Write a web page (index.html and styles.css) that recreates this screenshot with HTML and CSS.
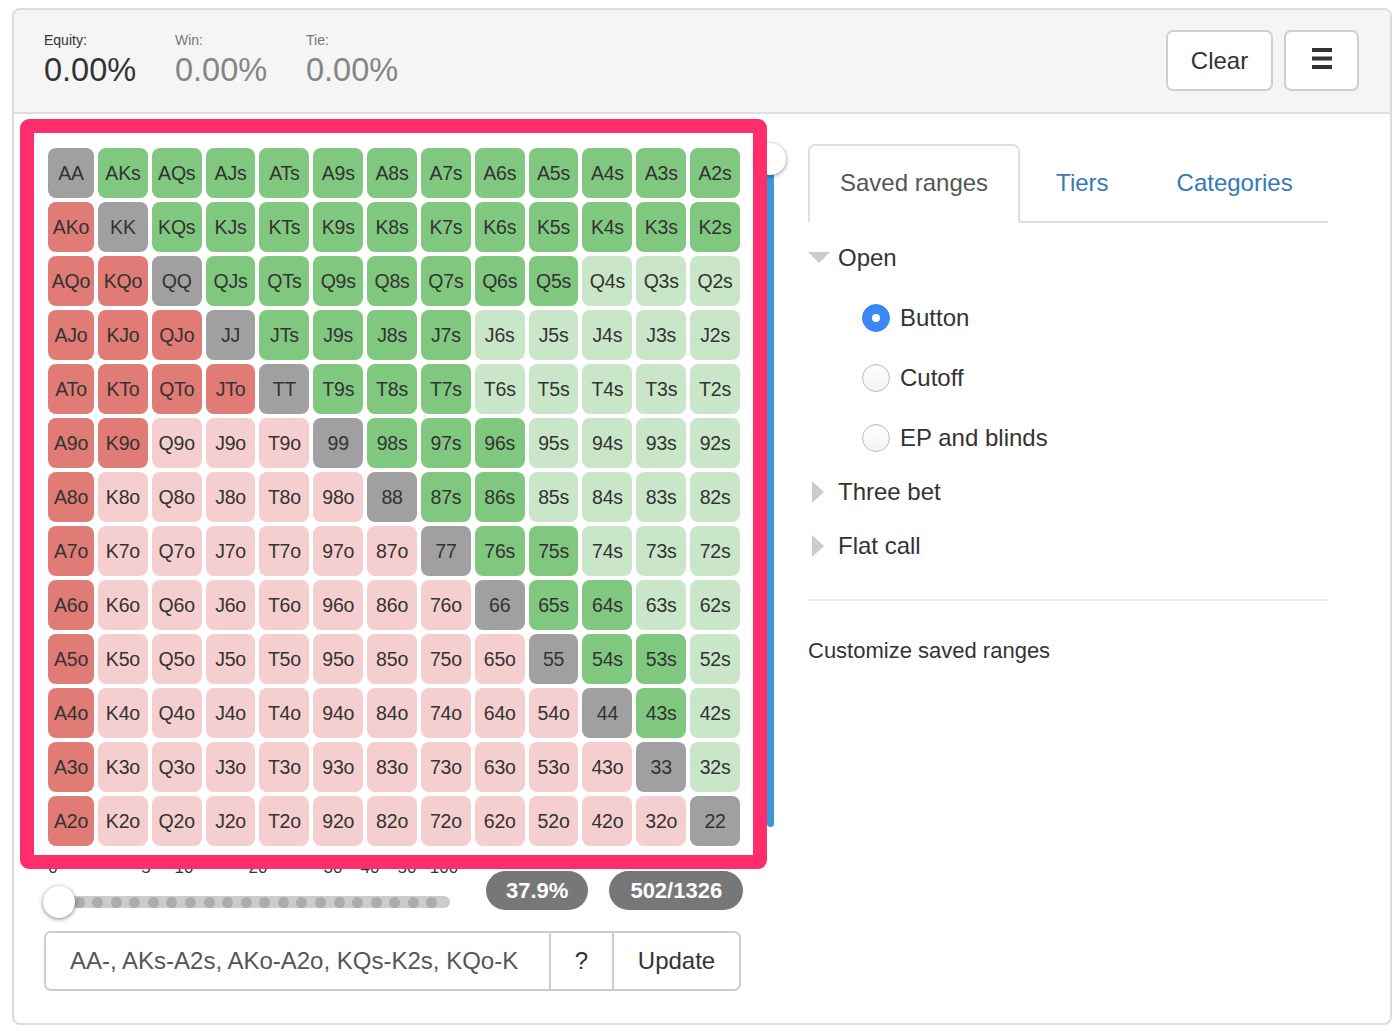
FILE: index.html
```html
<!DOCTYPE html>
<html lang="en">
<head>
<meta charset="utf-8">
<title>Range equity</title>
<link rel="stylesheet" href="styles.css">
</head>
<body>
<div class="app">
  <header class="topbar">
    <div class="stats">
      <div class="stat"><div class="stat-label">Equity:</div><div class="stat-value">0.00%</div></div>
      <div class="stat muted"><div class="stat-label">Win:</div><div class="stat-value">0.00%</div></div>
      <div class="stat muted"><div class="stat-label">Tie:</div><div class="stat-value">0.00%</div></div>
    </div>
    <div class="actions">
      <button class="btn btn-clear">Clear</button>
      <button class="btn btn-menu" aria-label="Menu">
        <svg width="20" height="21" viewBox="0 0 20 21"><rect x="0" y="0" width="20" height="4" fill="#333"/><rect x="0" y="8.5" width="20" height="4" fill="#333"/><rect x="0" y="17" width="20" height="4" fill="#333"/></svg>
      </button>
    </div>
  </header>
  <main class="main">
    <section class="left">
      <div class="grid-row">
        <div class="grid">
          <div class="c g">AA</div><div class="c s">AKs</div><div class="c s">AQs</div><div class="c s">AJs</div><div class="c s">ATs</div><div class="c s">A9s</div><div class="c s">A8s</div><div class="c s">A7s</div><div class="c s">A6s</div><div class="c s">A5s</div><div class="c s">A4s</div><div class="c s">A3s</div><div class="c s">A2s</div>
          <div class="c o">AKo</div><div class="c g">KK</div><div class="c s">KQs</div><div class="c s">KJs</div><div class="c s">KTs</div><div class="c s">K9s</div><div class="c s">K8s</div><div class="c s">K7s</div><div class="c s">K6s</div><div class="c s">K5s</div><div class="c s">K4s</div><div class="c s">K3s</div><div class="c s">K2s</div>
          <div class="c o">AQo</div><div class="c o">KQo</div><div class="c g">QQ</div><div class="c s">QJs</div><div class="c s">QTs</div><div class="c s">Q9s</div><div class="c s">Q8s</div><div class="c s">Q7s</div><div class="c s">Q6s</div><div class="c s">Q5s</div><div class="c ls">Q4s</div><div class="c ls">Q3s</div><div class="c ls">Q2s</div>
          <div class="c o">AJo</div><div class="c o">KJo</div><div class="c o">QJo</div><div class="c g">JJ</div><div class="c s">JTs</div><div class="c s">J9s</div><div class="c s">J8s</div><div class="c s">J7s</div><div class="c ls">J6s</div><div class="c ls">J5s</div><div class="c ls">J4s</div><div class="c ls">J3s</div><div class="c ls">J2s</div>
          <div class="c o">ATo</div><div class="c o">KTo</div><div class="c o">QTo</div><div class="c o">JTo</div><div class="c g">TT</div><div class="c s">T9s</div><div class="c s">T8s</div><div class="c s">T7s</div><div class="c ls">T6s</div><div class="c ls">T5s</div><div class="c ls">T4s</div><div class="c ls">T3s</div><div class="c ls">T2s</div>
          <div class="c o">A9o</div><div class="c o">K9o</div><div class="c lo">Q9o</div><div class="c lo">J9o</div><div class="c lo">T9o</div><div class="c g">99</div><div class="c s">98s</div><div class="c s">97s</div><div class="c s">96s</div><div class="c ls">95s</div><div class="c ls">94s</div><div class="c ls">93s</div><div class="c ls">92s</div>
          <div class="c o">A8o</div><div class="c lo">K8o</div><div class="c lo">Q8o</div><div class="c lo">J8o</div><div class="c lo">T8o</div><div class="c lo">98o</div><div class="c g">88</div><div class="c s">87s</div><div class="c s">86s</div><div class="c ls">85s</div><div class="c ls">84s</div><div class="c ls">83s</div><div class="c ls">82s</div>
          <div class="c o">A7o</div><div class="c lo">K7o</div><div class="c lo">Q7o</div><div class="c lo">J7o</div><div class="c lo">T7o</div><div class="c lo">97o</div><div class="c lo">87o</div><div class="c g">77</div><div class="c s">76s</div><div class="c s">75s</div><div class="c ls">74s</div><div class="c ls">73s</div><div class="c ls">72s</div>
          <div class="c o">A6o</div><div class="c lo">K6o</div><div class="c lo">Q6o</div><div class="c lo">J6o</div><div class="c lo">T6o</div><div class="c lo">96o</div><div class="c lo">86o</div><div class="c lo">76o</div><div class="c g">66</div><div class="c s">65s</div><div class="c s">64s</div><div class="c ls">63s</div><div class="c ls">62s</div>
          <div class="c o">A5o</div><div class="c lo">K5o</div><div class="c lo">Q5o</div><div class="c lo">J5o</div><div class="c lo">T5o</div><div class="c lo">95o</div><div class="c lo">85o</div><div class="c lo">75o</div><div class="c lo">65o</div><div class="c g">55</div><div class="c s">54s</div><div class="c s">53s</div><div class="c ls">52s</div>
          <div class="c o">A4o</div><div class="c lo">K4o</div><div class="c lo">Q4o</div><div class="c lo">J4o</div><div class="c lo">T4o</div><div class="c lo">94o</div><div class="c lo">84o</div><div class="c lo">74o</div><div class="c lo">64o</div><div class="c lo">54o</div><div class="c g">44</div><div class="c s">43s</div><div class="c ls">42s</div>
          <div class="c o">A3o</div><div class="c lo">K3o</div><div class="c lo">Q3o</div><div class="c lo">J3o</div><div class="c lo">T3o</div><div class="c lo">93o</div><div class="c lo">83o</div><div class="c lo">73o</div><div class="c lo">63o</div><div class="c lo">53o</div><div class="c lo">43o</div><div class="c g">33</div><div class="c ls">32s</div>
          <div class="c o">A2o</div><div class="c lo">K2o</div><div class="c lo">Q2o</div><div class="c lo">J2o</div><div class="c lo">T2o</div><div class="c lo">92o</div><div class="c lo">82o</div><div class="c lo">72o</div><div class="c lo">62o</div><div class="c lo">52o</div><div class="c lo">42o</div><div class="c lo">32o</div><div class="c g">22</div>
        </div>
        <div class="vslider">
          <div class="vtrack"></div>
          <div class="vknob"></div>
        </div>
      </div>
      <div class="controls">
        <div class="hslider-block">
          <div class="ticks">
            <span class="tick t0">0</span><span class="tick t1">5</span><span class="tick t2">10</span><span class="tick t3">20</span><span class="tick t4">30</span><span class="tick t5">40</span><span class="tick t6">50</span><span class="tick t7">100</span>
          </div>
          <div class="hslider">
            <div class="htrack">
              <i></i><i></i><i></i><i></i><i></i><i></i><i></i><i></i><i></i><i></i><i></i><i></i><i></i><i></i><i></i><i></i><i></i><i></i><i></i><i></i>
            </div>
            <div class="hknob"></div>
          </div>
        </div>
        <div class="badges">
          <span class="badge">37.9%</span>
          <span class="badge">502/1326</span>
        </div>
      </div>
      <div class="range-input">
        <input class="range-text" type="text" value="AA-, AKs-A2s, AKo-A2o, KQs-K2s, KQo-K9o, QJs-Q5s, QJo-QTo, JTs-J7s, JTo, T9s-T7s, 98s-96s, 87s-86s, 76s-75s, 65s-64s, 54s-53s, 43s">
        <button class="ig-btn ig-help">?</button>
        <button class="ig-btn ig-update">Update</button>
      </div>
      <div class="highlight"></div>
    </section>
    <aside class="right">
      <ul class="tabs">
        <li class="tab active">Saved ranges</li>
        <li class="tab">Tiers</li>
        <li class="tab">Categories</li>
      </ul>
      <div class="tree">
        <div class="node open"><span class="caret-down"></span><span class="node-label">Open</span></div>
        <div class="radio-row"><span class="radio checked"></span><span class="radio-label">Button</span></div>
        <div class="radio-row"><span class="radio"></span><span class="radio-label">Cutoff</span></div>
        <div class="radio-row"><span class="radio"></span><span class="radio-label">EP and blinds</span></div>
        <div class="node"><span class="caret-right"></span><span class="node-label">Three bet</span></div>
        <div class="node"><span class="caret-right"></span><span class="node-label">Flat call</span></div>
      </div>
      <hr class="rule">
      <div class="customize">Customize saved ranges</div>
    </aside>
  </main>
</div>
</body>
</html>
```
FILE: styles.css
```css
* { box-sizing: border-box; }
html, body { margin: 0; padding: 0; background: #fff; }
body {
  font-family: "Liberation Sans", Arial, Helvetica, sans-serif;
  color: #333;
}

.app {
  margin: 8px 0 0 12px;
  width: 1380px;
  height: 1017px;
  border: 2px solid #dcdcdc;
  border-radius: 8px;
  overflow: hidden;
  background: #fff;
}

/* ---------- top bar ---------- */
.topbar {
  height: 104px;
  background: #f5f5f5;
  border-bottom: 2px solid #dedede;
  display: flex;
  justify-content: space-between;
  align-items: flex-start;
  padding: 0 31px 0 30px;
}
.stats { display: flex; margin-top: 22px; }
.stat { width: 131px; flex: none; }
.stat-label { font-size: 14px; line-height: 16px; color: #333; }
.stat-value { font-size: 32.5px; line-height: 45px; color: #333; }
.stat.muted .stat-label { color: #777; }
.stat.muted .stat-value { color: #858585; }

.actions { display: flex; gap: 11px; margin-top: 20px; }
.btn {
  height: 61px;
  background: #fff;
  border: 2px solid #cfcfcf;
  border-radius: 7px;
  font-family: inherit;
  font-size: 24px;
  color: #333;
  padding: 0;
  display: flex;
  align-items: center;
  justify-content: center;
}
.btn-clear { width: 107px; }
.btn-menu { width: 75px; }
.btn-menu svg { display: block; margin-top: -4px; }

/* ---------- main ---------- */
.main { display: flex; height: 909px; }
.left {
  position: relative;
  flex: none;
  width: 772px;
  padding: 34px 0 0 30px;
}

.grid-row { display: flex; align-items: flex-start; margin-left: 4px; }
.grid {
  width: 692px;
  display: grid;
  grid-template-columns: 46px repeat(12, 1fr);
  grid-auto-rows: 50px;
  gap: 4px;
}
.c {
  border-radius: 8px;
  display: flex;
  align-items: center;
  justify-content: center;
  font-size: 19.5px;
  color: #333;
  white-space: nowrap;
  letter-spacing: -0.2px;
}
.c.g  { background: #a0a0a0; }
.c.s  { background: #80c880; }
.c.o  { background: #e07b75; }
.c.ls { background: #c9e6c9; }
.c.lo { background: #f5cfcf; }

.vslider {
  position: relative;
  width: 32px;
  height: 684px;
  margin-left: 14px;
  margin-top: -5px;
  padding-top: 16px;
}
.vtrack {
  width: 7px;
  height: 668px;
  margin: 0 auto;
  background: #3498db;
  border-radius: 0 0 4px 4px;
}
.vknob {
  position: absolute;
  left: 0;
  top: 0;
  width: 32px;
  height: 32px;
  border-radius: 50%;
  background: #fff;
  box-shadow: 0 1px 4px rgba(0,0,0,0.45);
}

.controls { display: flex; align-items: flex-start; margin-top: 12px; }
.hslider-block { width: 407px; margin-left: -1px; flex: none; }
.ticks { position: relative; height: 20px; font-size: 17px; line-height: 20px; color: #333; }
.tick { position: absolute; top: 0; transform: translateX(-50%); }
.t0 { left: 10px; }
.t1 { left: 103px; }
.t2 { left: 141px; }
.t3 { left: 215px; }
.t4 { left: 290px; }
.t5 { left: 327px; }
.t6 { left: 364px; }
.t7 { left: 401px; }

.hslider { position: relative; height: 40px; padding-top: 18px; }
.htrack {
  height: 12px;
  background: #cccccc;
  border-radius: 6px;
  display: flex;
  align-items: center;
  justify-content: space-between;
  padding: 0 12.5px 0 30.5px;
}
.htrack i {
  display: block;
  width: 11px;
  height: 11px;
  border-radius: 50%;
  background: #acacac;
}
.hknob {
  position: absolute;
  left: 0;
  top: 8px;
  width: 32px;
  height: 32px;
  border-radius: 50%;
  background: #fff;
  box-shadow: 0 1px 4px rgba(0,0,0,0.5);
}

.badges { display: flex; gap: 21px; margin-left: 36px; margin-top: 13px; }
.badge {
  height: 39px;
  line-height: 39px;
  padding: 0 20px;
  border-radius: 20px;
  background: #777;
  color: #fff;
  font-weight: bold;
  font-size: 22px;
  white-space: nowrap;
}
.badge + .badge { padding: 0 21px; }

.range-input {
  margin-top: 13px;
  width: 697px;
  height: 60px;
  border: 2px solid #cccccc;
  border-radius: 7px;
  display: flex;
  overflow: hidden;
}
.range-text {
  flex: none;
  width: 503px;
  height: 56px;
  border: none;
  outline: none;
  padding: 0 31px 0 24px;
  font-family: inherit;
  font-size: 24px;
  color: #555;
  background: #fff;
}
.ig-btn {
  flex: none;
  height: 56px;
  border: none;
  border-left: 2px solid #cccccc;
  background: #fff;
  font-family: inherit;
  font-size: 24px;
  color: #333;
  padding: 0;
}
.ig-help { width: 63px; }
.ig-update { width: 127px; }

.highlight {
  position: absolute;
  left: 6px;
  top: 5px;
  width: 747px;
  height: 750px;
  border: 14px solid #ff2d6c;
  border-radius: 9px;
  z-index: 5;
  pointer-events: none;
}

/* ---------- right panel ---------- */
.right {
  flex: none;
  width: 520px;
  margin-left: 22px;
  padding-top: 30px;
}
.tabs {
  list-style: none;
  margin: 0;
  padding: 0;
  display: flex;
  border-bottom: 2px solid #dedede;
}
.tab {
  flex: none;
  white-space: nowrap;
  margin: 0 4px -2px 0;
  padding: 23px 30px 24px;
  border: 2px solid transparent;
  border-radius: 7px 7px 0 0;
  font-size: 24px;
  line-height: 28px;
  color: #337ab7;
}
.tab.active {
  color: #555;
  background: #fff;
  border-color: #dedede #dedede #fff;
}

.tree { margin-top: 8px; }
.node {
  height: 54px;
  display: flex;
  align-items: center;
  font-size: 24px;
}
.caret-down, .caret-right {
  flex: none;
  width: 30px;
  height: 22px;
  position: relative;
}
.caret-down::before {
  content: "";
  position: absolute;
  left: 0;
  top: 5px;
  border-left: 11px solid transparent;
  border-right: 11px solid transparent;
  border-top: 11px solid #cccccc;
}
.caret-right::before {
  content: "";
  position: absolute;
  left: 4px;
  top: 0;
  border-top: 11px solid transparent;
  border-bottom: 11px solid transparent;
  border-left: 12px solid #cccccc;
}
.radio-row {
  height: 54px;
  margin-top: 6px;
  display: flex;
  align-items: center;
  padding-left: 54px;
  font-size: 24px;
}
.radio {
  flex: none;
  width: 28px;
  height: 28px;
  border-radius: 50%;
  border: 1px solid #bdbdbd;
  background: linear-gradient(#fff, #f3f3f3);
  box-shadow: inset 0 1px 1px rgba(0,0,0,0.06);
  margin-right: 10px;
  position: relative;
}
.radio.checked {
  border-color: #3a86f4;
  background: #3b88f5;
}
.radio.checked::after {
  content: "";
  position: absolute;
  left: 50%;
  top: 50%;
  width: 8px;
  height: 8px;
  margin: -4px 0 0 -4px;
  border-radius: 50%;
  background: #fff;
}
.rule {
  margin: 26px 0 0;
  border: none;
  border-top: 2px solid #ececec;
  height: 0;
}
.customize {
  margin-top: 35px;
  font-size: 22px;
  line-height: 30px;
  color: #333;
}
```
